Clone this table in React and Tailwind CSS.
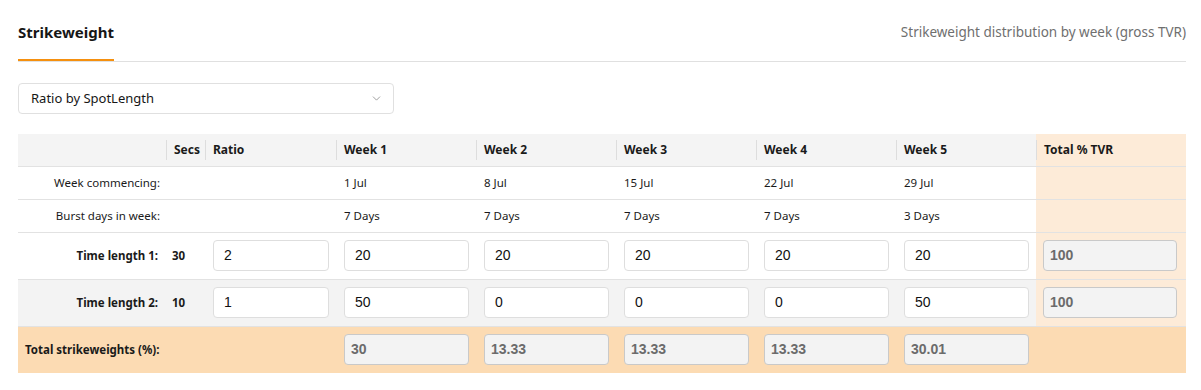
import { ChevronDown } from "lucide-react";

const weeks = [
  { name: "Week 1", start: "1 Jul", days: "7 Days", t1: "20", t2: "50", total: "30" },
  { name: "Week 2", start: "8 Jul", days: "7 Days", t1: "20", t2: "0", total: "13.33" },
  { name: "Week 3", start: "15 Jul", days: "7 Days", t1: "20", t2: "0", total: "13.33" },
  { name: "Week 4", start: "22 Jul", days: "7 Days", t1: "20", t2: "0", total: "13.33" },
  { name: "Week 5", start: "29 Jul", days: "3 Days", t1: "20", t2: "50", total: "30.01" },
];

const lengths = [
  { label: "Time length 1:", secs: "30", ratio: "2", key: "t1", tvr: "100", bg: "bg-white" },
  { label: "Time length 2:", secs: "10", ratio: "1", key: "t2", tvr: "100", bg: "bg-[#f3f3f3]" },
];

function Field({ value }) {
  return (
    <div className="h-[31px] w-full rounded-[4px] border border-[#dedede] bg-white flex items-center pl-[10px] text-[14px] text-[#111] font-['Liberation_Sans',Arial,sans-serif]">
      {value}
    </div>
  );
}

function ReadOnly({ value }) {
  return (
    <div className="h-[31px] w-full rounded-[4px] border border-[#c9c9c9] bg-[#f3f3f3] flex items-center pl-[6px] text-[14px] font-bold text-[#6b6b6b] font-['Liberation_Sans',Arial,sans-serif]">
      {value}
    </div>
  );
}

function HeadCell({ children, divider = true, className = "" }) {
  return (
    <th className={`p-0 h-[32px] border-b border-[#e2e2e2] text-left font-bold text-[12px] ${className}`}>
      <div className="flex items-center h-full">
        {divider && <div className="w-px h-[20px] bg-[#dddddd]" />}
        <span className="pl-[7px]">{children}</span>
      </div>
    </th>
  );
}

export default function App() {
  return (
    <div className="bg-white min-h-screen pl-[18px] pr-[15px] font-['Noto_Sans','Open_Sans',sans-serif] text-[#1a1a1a]">
      <div className="flex items-end justify-between border-b border-[#e0e0e0]">
        <div className="pt-[20px] pb-[15px] border-b-2 border-[#f5900f] w-[96px]">
          <h1 className="text-[15px] font-bold leading-[24px] text-[#161616]">Strikeweight</h1>
        </div>
        <div className="pb-[19px] text-[13.5px] text-[#6f6f6f] leading-[20px]">
          Strikeweight distribution by week (gross TVR)
        </div>
      </div>

      <div className="mt-[21px] w-[376px] h-[31px] rounded-[4px] border border-[#e0e0e0] flex items-center justify-between pl-[12px] pr-[10px]">
        <span className="text-[13px] text-[#161616]">Ratio by SpotLength</span>
        <ChevronDown size={13} strokeWidth={1.5} className="text-[#8a8a8a]" />
      </div>

      <table className="mt-[20px] w-[1168px] table-fixed border-collapse text-[11.5px]">
        <colgroup>
          <col className="w-[148px]" />
          <col className="w-[39px]" />
          <col className="w-[131px]" />
          <col className="w-[140px]" />
          <col className="w-[140px]" />
          <col className="w-[140px]" />
          <col className="w-[140px]" />
          <col className="w-[140px]" />
          <col className="w-[150px]" />
        </colgroup>
        <thead>
          <tr className="bg-[#f4f4f4]">
            <HeadCell divider={false} />
            <HeadCell>Secs</HeadCell>
            <HeadCell>Ratio</HeadCell>
            {weeks.map((w) => (
              <HeadCell key={w.name}>{w.name}</HeadCell>
            ))}
            <HeadCell className="bg-[#fdebd8]">Total % TVR</HeadCell>
          </tr>
        </thead>
        <tbody>
          <tr>
            <td className="h-[33px] border-b border-[#e2e2e2] text-right pr-[6px]">Week commencing:</td>
            <td className="border-b border-[#e2e2e2]" />
            <td className="border-b border-[#e2e2e2]" />
            {weeks.map((w) => (
              <td key={w.name} className="border-b border-[#e2e2e2] pl-[8px]">{w.start}</td>
            ))}
            <td className="border-b border-[#e2e2e2] bg-[#fdebd8]" />
          </tr>
          <tr>
            <td className="h-[33px] border-b border-[#e2e2e2] text-right pr-[6px]">Burst days in week:</td>
            <td className="border-b border-[#e2e2e2]" />
            <td className="border-b border-[#e2e2e2]" />
            {weeks.map((w) => (
              <td key={w.name} className="border-b border-[#e2e2e2] pl-[8px]">{w.days}</td>
            ))}
            <td className="border-b border-[#e2e2e2] bg-[#fdebd8]" />
          </tr>
          {lengths.map((l) => (
            <tr key={l.label} className={l.bg}>
              <td className="h-[47px] border-b border-[#e2e2e2] text-right pr-[8px] font-bold">{l.label}</td>
              <td className="border-b border-[#e2e2e2] pl-[6px] font-bold">{l.secs}</td>
              <td className="border-b border-[#e2e2e2] pl-[8px] pr-[7px]">
                <Field value={l.ratio} />
              </td>
              {weeks.map((w) => (
                <td key={w.name} className="border-b border-[#e2e2e2] pl-[8px] pr-[7px]">
                  <Field value={w[l.key]} />
                </td>
              ))}
              <td className="border-b border-[#e2e2e2] bg-[#fdebd8] pl-[7px] pr-[9px]">
                <ReadOnly value={l.tvr} />
              </td>
            </tr>
          ))}
          <tr className="bg-[#fcdbb3]">
            <td colSpan={3} className="h-[47px] pl-[7px] font-bold">Total strikeweights (%):</td>
            {weeks.map((w) => (
              <td key={w.name} className="pl-[8px] pr-[7px]">
                <ReadOnly value={w.total} />
              </td>
            ))}
            <td />
          </tr>
        </tbody>
      </table>
    </div>
  );
}
